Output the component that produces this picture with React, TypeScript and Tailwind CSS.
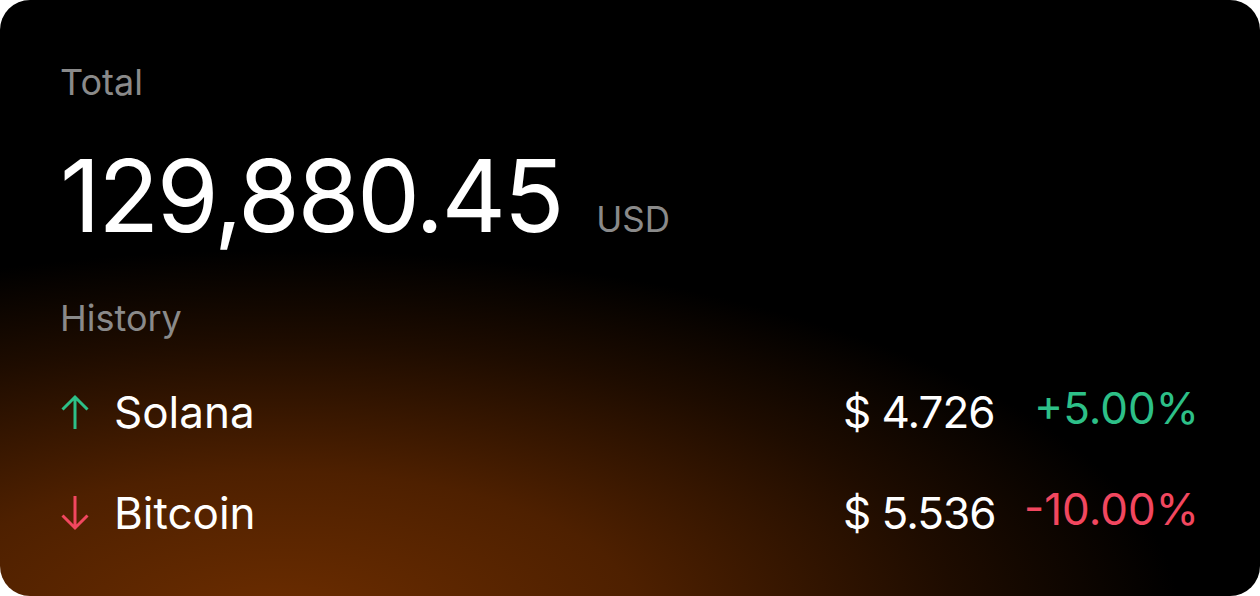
const ArrowUp = ({ className }: { className?: string }) => (
  <svg width="30" height="36" viewBox="0 0 30 36" fill="none" className={className}>
    <path d="M15 35V3M2.5 15.5L15 3l12.5 12.5" stroke="currentColor" strokeWidth="3" />
  </svg>
);

const ArrowDown = ({ className }: { className?: string }) => (
  <svg width="30" height="36" viewBox="0 0 30 36" fill="none" className={className}>
    <path d="M15 1v32M2.5 20.5L15 33l12.5-12.5" stroke="currentColor" strokeWidth="3" />
  </svg>
);

const rows = [
  { name: "Solana", price: "$ 4.726", change: "+5.00%", up: true },
  { name: "Bitcoin", price: "$ 5.536", change: "-10.00%", up: false },
];

export default function App() {
  return (
    <div className="h-[596px] w-[1260px] bg-white font-['Inter',sans-serif]">
      <div className="flex h-full w-full flex-col overflow-hidden rounded-[30px] bg-[radial-gradient(ellipse_900px_370px_at_280px_620px,#6c2d00_0%,#4e2000_40%,#1e0c00_75%,#000_100%)] pl-[60px] pr-[61px] pt-[64px]">
        <p className="text-[36px] leading-none text-[#8a8a8a]">Total</p>
        <div className="mt-[46px] flex items-baseline gap-[34px]">
          <span className="text-[100px] leading-none tracking-[-2.4px] text-white">129,880.45</span>
          <span className="text-[35px] leading-none text-[#8a8a8a]">USD</span>
        </div>
        <p className="mt-[54px] text-[36px] leading-none text-[#8a8a8a]">History</p>
        <div className="mt-[54px] flex flex-col gap-[57px]">
          {rows.map((r) => (
            <div key={r.name} className="flex items-center">
              {r.up ? (
                <ArrowUp className="text-[#2dc088]" />
              ) : (
                <ArrowDown className="text-[#f2475f]" />
              )}
              <span className="ml-[24px] flex-1 text-[44px] leading-none text-white">{r.name}</span>
              <span className="w-[176px] text-[44px] leading-none tracking-[-1px] text-white">{r.price}</span>
              <span
                className={`w-[180px] -translate-y-[4px] text-right text-[44px] leading-none ${
                  r.up ? "text-[#2dc088]" : "text-[#f2475f]"
                }`}
              >
                {r.change}
              </span>
            </div>
          ))}
        </div>
      </div>
    </div>
  );
}
